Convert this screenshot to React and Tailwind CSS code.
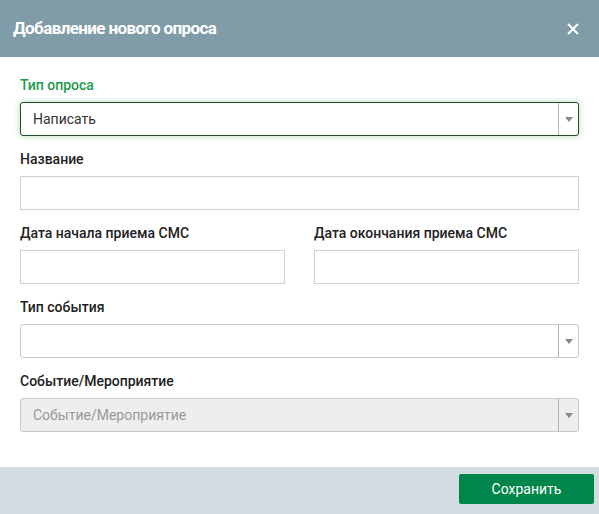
import React from 'react';

const font = { fontFamily: 'Roboto, "Noto Sans", sans-serif' };

function Arrow() {
  return (
    <div className="flex w-[20px] items-center justify-center self-stretch border-l border-[#b5b5b5]">
      <svg width="8" height="5" viewBox="0 0 8 5">
        <path d="M0 0h8L4 5z" fill="#888" />
      </svg>
    </div>
  );
}

function Label({ children, green }) {
  return (
    <div className={`mb-[9px] text-[14px] font-medium leading-[16px] ${green ? 'text-[#1d9a4e]' : 'text-[#222]'}`}>
      {children}
    </div>
  );
}

export default function App() {
  return (
    <div className="flex h-[514px] w-[599px] flex-col bg-white" style={font}>
      <div className="flex h-[57px] items-center justify-between bg-[#7f9ca8] pl-[13px] pr-[20px]">
        <h1 className="text-[17px] font-bold tracking-[-0.6px] text-white">Добавление нового опроса</h1>
        <svg width="12" height="12" viewBox="0 0 12 12">
          <path d="M1 1l10 10M11 1L1 11" stroke="white" strokeWidth="2" />
        </svg>
      </div>

      <div className="flex flex-1 flex-col px-[20px] pt-[20px]">
        <Label green>Тип опроса</Label>
        <div className="flex h-[34px] items-center rounded-[3px] border border-[#1f4d2a] bg-white shadow-[0_0_6px_rgba(80,170,80,0.45)]">
          <div className="flex-1 pl-[12px] text-[14px] text-[#333]">Написать</div>
          <Arrow />
        </div>

        <div className="mt-[15px]">
          <Label>Название</Label>
          <div className="h-[34px] border border-[#d0d0dc] bg-white" />
        </div>

        <div className="mt-[15px] flex justify-between">
          <div className="w-[265px]">
            <Label>Дата начала приема СМС</Label>
            <div className="h-[34px] border border-[#d0d0dc] bg-white" />
          </div>
          <div className="w-[265px]">
            <Label>Дата окончания приема СМС</Label>
            <div className="h-[34px] border border-[#d0d0dc] bg-white" />
          </div>
        </div>

        <div className="mt-[15px]">
          <Label>Тип события</Label>
          <div className="flex h-[34px] items-center rounded-[3px] border border-[#c8c8c8] bg-white">
            <div className="flex-1" />
            <Arrow />
          </div>
        </div>

        <div className="mt-[15px]">
          <Label>Событие/Мероприятие</Label>
          <div className="flex h-[34px] items-center rounded-[3px] border border-[#c8c8c8] bg-[#eeeeee]">
            <div className="flex-1 pl-[12px] text-[14px] text-[#999]">Событие/Мероприятие</div>
            <Arrow />
          </div>
        </div>
      </div>

      <div className="flex h-[47px] items-start justify-end bg-[#d4dbe1] pr-[5px] pt-[7px]">
        <button className="h-[30px] w-[135px] rounded-[2px] bg-[#00864a] text-[14px] text-white">Сохранить</button>
      </div>
    </div>
  );
}
